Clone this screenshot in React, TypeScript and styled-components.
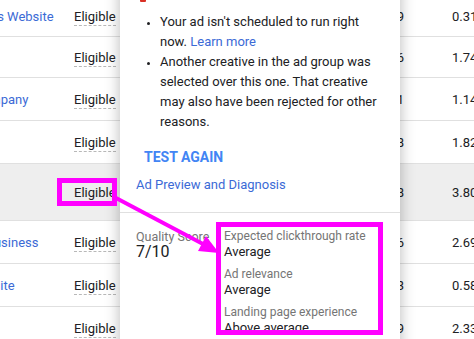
import styled, { createGlobalStyle } from 'styled-components'

const rows = [
  { name: 'AI Business Website', count: '129', value: '0.31', height: 41 },
  { name: '', count: '86', value: '1.74', height: 41 },
  { name: 'Demo Company', count: '41', value: '1.14', height: 43 },
  { name: '', count: '58', value: '1.82', height: 43 },
  { name: '', count: '208', value: '3.80', height: 57, active: true },
  { name: 'My Own Business', count: '96', value: '2.69', height: 43 },
  { name: 'Main Website', count: '73', value: '0.58', height: 43 },
  { name: '', count: '119', value: '2.33', height: 43 },
]

const reasons = [
  { text: "Your ad isn't scheduled to run right now.", link: 'Learn more' },
  {
    text: 'Another creative in the ad group was selected over this one. That creative may also have been rejected for other reasons.',
  },
]

const factors = [
  { label: 'Expected clickthrough rate', value: 'Average' },
  { label: 'Ad relevance', value: 'Average' },
  { label: 'Landing page experience', value: 'Above average' },
]

const GlobalStyle = createGlobalStyle`
  html, body {
    margin: 0;
    padding: 0;
    background: #ffffff;
  }
  body {
    font-family: Roboto, "Liberation Sans", Arial, sans-serif;
    color: #202124;
  }
`

const Screen = styled.div`
  position: relative;
  width: 474px;
  height: 339px;
  overflow: hidden;
  background: #ffffff;
`

const Table = styled.div`
  display: flex;
  flex-direction: column;
  width: 587px;
  margin-left: -64px;
  margin-top: -4px;
`

const Row = styled.div<{ $height: number; $active?: boolean }>`
  display: grid;
  grid-template-columns: 138px 1fr 60px 119px;
  align-items: center;
  height: ${({ $height }) => $height}px;
  box-sizing: border-box;
  border-bottom: 1px solid #e0e0e0;
  background: ${({ $active }) => ($active ? '#eeeeee' : '#ffffff')};
  font-size: 13px;
`

const NameCell = styled.a`
  color: #3b6ad6;
  white-space: nowrap;
  overflow: hidden;
  text-decoration: none;
`

const StatusCell = styled.div`
  display: flex;
`

const Status = styled.span<{ $plain?: boolean }>`
  color: #202124;
  line-height: 16px;
  padding-top: 2px;
  border-bottom: 1px dashed ${({ $plain }) => ($plain ? 'transparent' : '#b8b8b8')};
`

const CountCell = styled.div`
  text-align: right;
  color: #202124;
`

const ValueCell = styled.div`
  padding-left: 48px;
  color: #202124;
  white-space: nowrap;
`

const Popup = styled.div`
  position: absolute;
  left: 120px;
  top: -30px;
  bottom: -20px;
  width: 280px;
  background: #ffffff;
  box-shadow: 0 2px 14px rgba(0, 0, 0, 0.28);
  padding-top: 16px;
  font-size: 13px;
`

const Header = styled.div`
  display: flex;
  align-items: flex-end;
  height: 16px;
  padding-left: 20px;
`

const StatusIcon = styled.span`
  width: 6px;
  height: 16px;
  background: #d93025;
  border-radius: 1px;
`

const Reasons = styled.ul`
  margin: 10px 16px 0 26px;
  padding: 0 0 0 14px;
  line-height: 20px;
  color: #202124;

  li::marker {
    font-size: 11px;
  }
`

const Link = styled.a`
  color: #3b6ad6;
  text-decoration: none;
`

const TestButton = styled.button`
  display: block;
  margin: 15px 0 0 16px;
  padding: 0 8px;
  height: 20px;
  border: none;
  background: none;
  font-family: Roboto, "Liberation Sans", Arial, sans-serif;
  font-size: 14px;
  font-weight: 700;
  color: #4285f4;
`

const DiagnosisLink = styled(Link)`
  display: block;
  margin: 8px 16px 0;
  line-height: 20px;
`

const Divider = styled.hr`
  margin: 17px 0 0;
  border: none;
  border-top: 1px solid #e0e0e0;
`

const Quality = styled.div`
  display: grid;
  grid-template-columns: 88px 1fr;
  padding: 16px 16px 0;
  line-height: 15px;
`

const ScoreLabel = styled.div`
  font-size: 12.5px;
  color: #757575;
`

const ScoreValue = styled.div`
  font-size: 16px;
  line-height: 16px;
  color: #202124;
`

const Factors = styled.div`
  display: flex;
  flex-direction: column;
  gap: 8px;
`

const FactorLabel = styled.div`
  font-size: 12px;
  color: #757575;
`

const FactorValue = styled.div`
  color: #202124;
`

const Highlight = styled.div<{ $x: number; $y: number; $w: number; $h: number }>`
  position: absolute;
  left: ${({ $x }) => $x}px;
  top: ${({ $y }) => $y}px;
  width: ${({ $w }) => $w}px;
  height: ${({ $h }) => $h}px;
  box-sizing: border-box;
  border: 5px solid #ff00ff;
  pointer-events: none;
`

const ArrowLayer = styled.svg`
  position: absolute;
  left: 0;
  top: 0;
  pointer-events: none;
`

export default function App() {
  return (
    <Screen>
      <GlobalStyle />
      <Table>
        {rows.map((row, i) => (
          <Row key={i} $height={row.height} $active={row.active}>
            <NameCell href="#">{row.name}</NameCell>
            <StatusCell>
              <Status $plain={row.active}>Eligible</Status>
            </StatusCell>
            <CountCell>{row.count}</CountCell>
            <ValueCell>{row.value}</ValueCell>
          </Row>
        ))}
      </Table>

      <Popup>
        <Header>
          <StatusIcon />
        </Header>
        <Reasons>
          {reasons.map((r, i) => (
            <li key={i}>
              {r.text}
              {r.link && (
                <>
                  {' '}
                  <Link href="#">{r.link}</Link>
                </>
              )}
            </li>
          ))}
        </Reasons>
        <TestButton>TEST AGAIN</TestButton>
        <DiagnosisLink href="#">Ad Preview and Diagnosis</DiagnosisLink>
        <Divider />
        <Quality>
          <div>
            <ScoreLabel>Quality Score</ScoreLabel>
            <ScoreValue>7/10</ScoreValue>
          </div>
          <Factors>
            {factors.map((f) => (
              <div key={f.label}>
                <FactorLabel>{f.label}</FactorLabel>
                <FactorValue>{f.value}</FactorValue>
              </div>
            ))}
          </Factors>
        </Quality>
      </Popup>

      <Highlight $x={57} $y={178} $w={60} $h={28} />
      <Highlight $x={216} $y={222} $w={167} $h={113} />
      <ArrowLayer width="474" height="339" viewBox="0 0 474 339">
        <line x1="116" y1="198" x2="203" y2="244" stroke="#ff00ff" strokeWidth="4" />
        <polygon points="219,253 198,251 206,236" fill="#ff00ff" />
      </ArrowLayer>
    </Screen>
  )
}
